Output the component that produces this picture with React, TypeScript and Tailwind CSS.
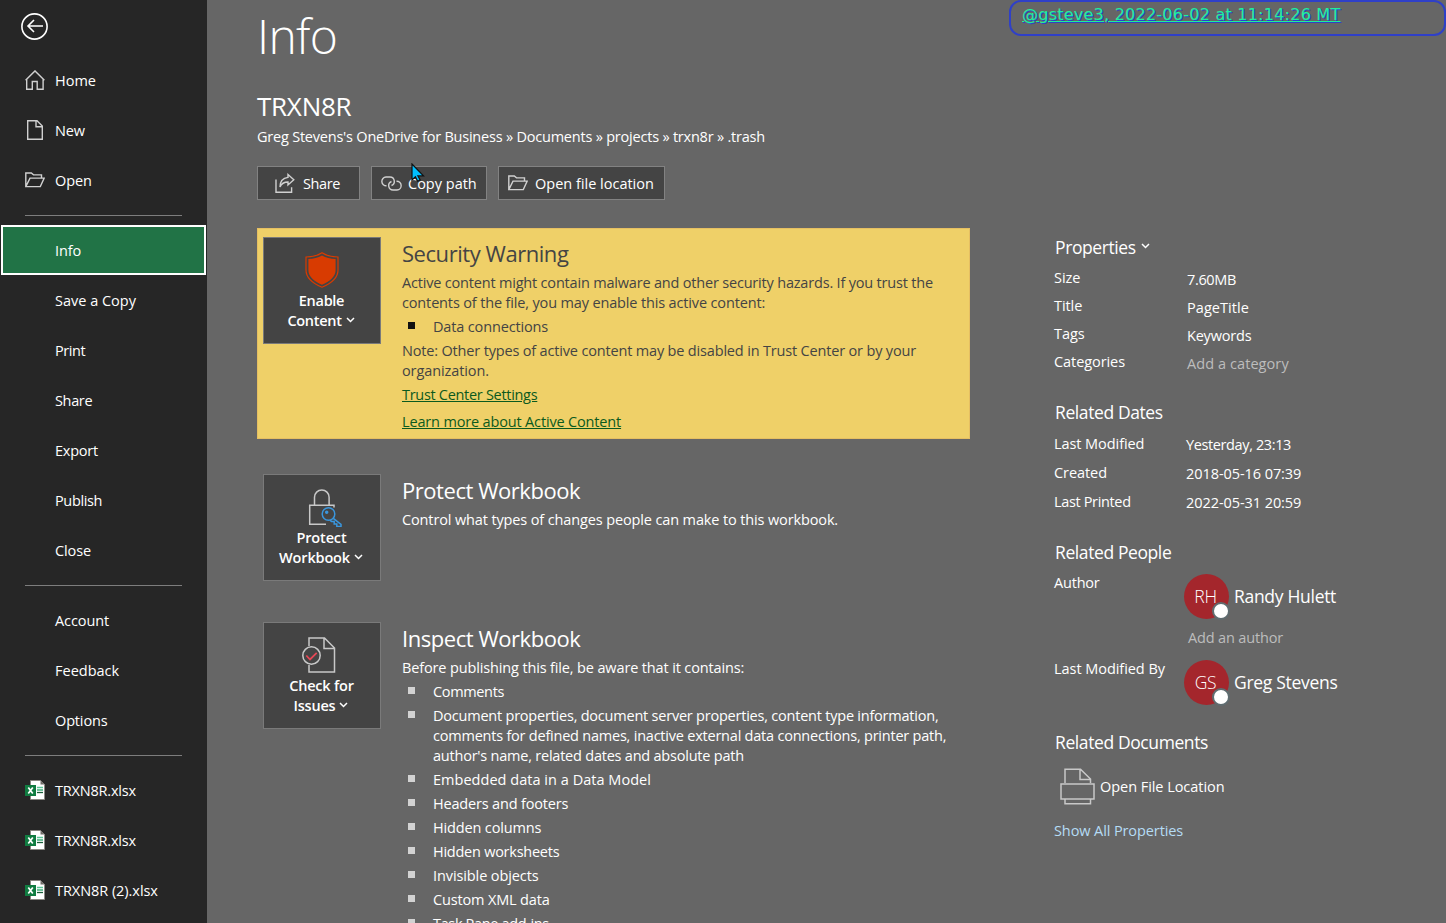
import React from "react";

const base = "block whitespace-nowrap text-[14.5px] leading-5";
const h2 = "h-9 text-[22px] leading-8 tracking-[-0.45px]";

function Home() {
  return (
    <svg width="20" height="20" viewBox="0 0 20 20" fill="none" stroke="#d0d0d0" strokeWidth="1.4">
      <path d="M.6 10.200 10 .9l9.400 9.300M1.700 9.200v10.100h5.600v-7.800h4.900v7.800h5.900V9.200" />
    </svg>
  );
}
function NewDoc() {
  return (
    <svg width="20" height="20" viewBox="0 0 20 20" fill="none" stroke="#d0d0d0" strokeWidth="1.4">
      <path d="M2.700.7h9.300l5.300 5.300v13.300H2.700zM11 .7v6h6.300" />
    </svg>
  );
}
function Folder() {
  return (
    <svg width="20" height="16" viewBox="0 0 20 16" fill="none" stroke="#d0d0d0" strokeWidth="1.4">
      <path d="M.8 14.600V1h5.500l2.200 1.900h8v3.200M.8 14.600 5 6.100h14.200l-3.900 8.500z" />
    </svg>
  );
}
function ShareIcon() {
  return (
    <svg width="20" height="20" viewBox="0 0 20 20" fill="none" stroke="#d0d0d0" strokeWidth="1.4">
      <path d="M1 6.500v12.700h15.600v-5M13 1.500l5.800 5.200-5.800 5.200V9C9 9 6.500 10.500 5 14c0-5.500 3-9 8-9.600z" />
    </svg>
  );
}
function LinkIcon() {
  return (
    <svg width="21" height="15" viewBox="0 0 21 15" fill="none" stroke="#d0d0d0" strokeWidth="1.4">
      <path d="M5.500 9.800A4.400 4.400 0 0 1 5 1h4a4.400 4.400 0 0 1 1.500 8.500 M15.500 5.200a4.400 4.400 0 0 1 .5 8.800h-4a4.400 4.400 0 0 1-1.500-8.500" />
    </svg>
  );
}
function Excel() {
  return (
    <svg width="20" height="20" viewBox="0 0 20 20">
      <path d="M5.500.5h10l4 4v15h-14z" fill="#fff" stroke="#8a8782" />
      <path d="M15.500.5v4h4z" fill="#6f6c68" />
      <path d="M12 7.500h6" stroke="#5cc99a" strokeWidth="1.500" />
      <path d="M12 10h6" stroke="#21a366" strokeWidth="1.300" />
      <path d="M12 12.500h6" stroke="#185c37" strokeWidth="1.300" />
      <path d="M0 5h11v11H0z" fill="#107c41" />
      <path d="m3.300 7.400 4.500 6.200M7.800 7.400l-4.500 6.200" stroke="#fff" strokeWidth="1.700" />
    </svg>
  );
}
function Chevron() {
  return (
    <svg className="mb-[3px] shrink-0" width="9" height="6" viewBox="0 0 9 6" fill="none" stroke="#fff" strokeWidth="1.500">
      <path d="m1 1 3.500 3.500L8 1" />
    </svg>
  );
}
function Shield() {
  return (
    <svg width="34" height="36" viewBox="0 0 34 36">
      <path d="M17 .8c4 2.700 9 4 16 4.200v13c0 8-7 13.500-16 17.200C8 31.500 1 26 1 18V5C8 4.800 13 3.500 17 .8z" fill="none" stroke="#d83b01" strokeWidth="1.200" />
      <path d="M17 3.400c4 2.300 8.500 3.400 13.600 3.700V18c0 7-6 11.400-13.600 14.800C9.400 29.400 3.400 25 3.400 18V7.100C8.500 6.800 13 5.700 17 3.400z" fill="#d83b01" />
    </svg>
  );
}
function Lock() {
  return (
    <svg className="ml-[6px]" width="34" height="38" viewBox="0 0 34 38" fill="none" stroke="#c8c8c8" strokeWidth="1.500">
      <path d="M6.500 16V8.300a7.300 7.300 0 0 1 14.600 0V16M26 18.500V16.200H1.700V35.300H18" />
      <g stroke="#3a96dd">
        <circle cx="20.500" cy="25" r="6.300" />
        <path d="m25.300 29.300 7.700 6v2.300h-4.200v-2.500h-2.600v-2.500h-2.700l-1.500-1.500" />
        <circle cx="18.700" cy="23.200" r="1" fill="#3a96dd" />
      </g>
    </svg>
  );
}
function Inspect() {
  return (
    <svg className="mr-[6px]" width="34" height="36" viewBox="0 0 34 36" fill="none" stroke="#c8c8c8" strokeWidth="1.500">
      <path d="M7 9V1h15.500l10 10v24H7v-7M22 1v10.500h10.500" />
      <circle cx="9.500" cy="18.500" r="8.700" />
      <path d="m4.300 18.500 3.700 4 6.700-6.700" stroke="#e74856" strokeWidth="1.800" />
    </svg>
  );
}
function FileLocation() {
  return (
    <svg width="35" height="37" viewBox="0 0 35 37" fill="none" stroke="#c8c8c8" strokeWidth="1.500">
      <path d="M5 15V1.200h15.500L30.500 11v4M20 1.200v10.300h10.500M1 16h33v15H1zM5 31.500v4.300h25.500v-4.300" />
    </svg>
  );
}

function NavItem({ label, icon, ls = "tracking-[-0.1px]" }: { label: string; icon?: React.ReactNode; ls?: string }) {
  return (
    <li className="flex h-[50px] items-center pl-[25px]">
      <span className="flex w-[30px]">{icon}</span>
      <span className={`${base} pt-0.5 ${ls}`}>{label}</span>
    </li>
  );
}
function Divider() {
  return (
    <li className="flex h-5 items-center pr-[25px] pl-[25px]">
      <span className="h-px w-full bg-[#7d7d7d]" />
    </li>
  );
}
function Tile({ icon, a, b, ls }: { icon: React.ReactNode; a: string; b: string; ls: string }) {
  return (
    <button className="flex h-[107px] w-[118px] shrink-0 flex-col items-center border border-[#7a7a7a] bg-[#444] pt-[14px]">
      <span className="flex h-[39px]">{icon}</span>
      <span className={`${base} pr-px font-semibold ${ls}`}>{a}</span>
      <span className="flex items-center gap-1 pr-0.5">
        <span className={`${base} font-semibold ${ls}`}>{b}</span>
        <Chevron />
      </span>
    </button>
  );
}
function Bullet({ lines, dark, ls }: { lines: string[]; dark?: boolean; ls?: string }) {
  return (
    <li className="mb-1 flex pl-1.5">
      <span className={`mt-[5px] mr-[18px] h-[7px] w-[7px] shrink-0 ${dark ? "bg-[#111]" : "bg-[#d2d2d2]"}`} />
      <span>
        {lines.map((l) => (
          <span key={l} className={`${base} ${ls ?? "tracking-[-0.15px]"}`}>{l}</span>
        ))}
      </span>
    </li>
  );
}
function Heading({ children }: { children: React.ReactNode }) {
  return <h3 className="flex h-6 items-center gap-[5px] pl-px text-[17.500px] tracking-[-0.4px] whitespace-nowrap">{children}</h3>;
}
function Person({ initials, name }: { initials: string; name: string }) {
  return (
    <span className="flex items-center">
      <span className="relative flex h-[45px] w-[45px] items-center justify-center rounded-full bg-[#a4262c] pr-0.5 text-[17.500px] font-light tracking-[-0.3px]">
        {initials}
        <span className="absolute right-[-1px] bottom-[-1px] h-[18px] w-[18px] rounded-full border-2 border-[#5f6c70] bg-white" />
      </span>
      <span className="ml-[5px] text-[17.500px] whitespace-nowrap tracking-[-0.3px]">{name}</span>
    </span>
  );
}
function Row({ k, v, h, off, ls = "tracking-[-0.2px]", muted }: { k: string; v: string; h: string; off: string; ls?: string; muted?: boolean }) {
  return (
    <div className={`flex ${h}`}>
      <span className={`${base} w-[132px] ${k === "Last Printed" ? "tracking-[-0.35px]" : "tracking-[-0.07px]"}`}>{k}</span>
      <span className={`${base} ${ls} ${off} ${muted ? "text-[#bdbdbd]" : ""}`}>{v}</span>
    </div>
  );
}

export default function App() {
  return (
    <div className="flex h-[923px] w-[1446px] overflow-hidden bg-[#666] font-['Open_Sans','Noto_Sans',sans-serif] text-white">
      <nav className="h-full w-[207px] shrink-0 bg-[#262626]">
        <div className="flex h-[55px] pt-[13px] pl-[21px]">
          <svg width="27" height="27" viewBox="0 0 27 27" fill="none" stroke="#fff" strokeWidth="1.600">
            <circle cx="13.500" cy="13.500" r="12.600" />
            <path d="M22 13H7M13 7l-6 6 6 6" />
          </svg>
        </div>
        <ul>
          <NavItem label="Home" icon={<Home />} ls="tracking-normal" />
          <NavItem label="New" icon={<NewDoc />} />
          <NavItem label="Open" icon={<Folder />} />
          <Divider />
          <li className="ml-px flex h-[50px] w-[205px] items-center border-2 border-white bg-[#217346] pl-[52px]">
            <span className={`${base} pt-0.5 tracking-[-0.1px]`}>Info</span>
          </li>
          <NavItem label="Save a Copy" ls="tracking-normal" />
          <NavItem label="Print" ls="tracking-[-0.45px]" />
          <NavItem label="Share" ls="tracking-[-0.35px]" />
          <NavItem label="Export" ls="tracking-[-0.25px]" />
          <NavItem label="Publish" ls="tracking-[-0.35px]" />
          <NavItem label="Close" />
          <Divider />
          <NavItem label="Account" />
          <NavItem label="Feedback" ls="tracking-normal" />
          <NavItem label="Options" ls="tracking-[-0.15px]" />
          <Divider />
          <NavItem label="TRXN8R.xlsx" icon={<Excel />} ls="tracking-[-0.2px]" />
          <NavItem label="TRXN8R.xlsx" icon={<Excel />} ls="tracking-[-0.2px]" />
          <NavItem label="TRXN8R (2).xlsx" icon={<Excel />} ls="tracking-[-0.05px]" />
        </ul>
      </nav>

      <main className="relative flex h-full w-[797px] shrink-0 flex-col pl-[50px]">
        <h1 className="h-[90px] shrink-0 pt-0.5 text-[48px] leading-[68px] font-light tracking-[-0.7px]">Info</h1>
        <h2 className="h-[37px] shrink-0 text-[26px] leading-8 tracking-[-0.25px]">TRXN8R</h2>
        <p className={`${base} shrink-0 tracking-[-0.215px]`}>
          Greg Stevens's OneDrive for Business » Documents » projects » trxn8r » .trash
        </p>
        <div className="mt-[19px] flex shrink-0 gap-[11px]">
          <button className="flex h-[34px] w-[103px] items-center border border-[#828282] bg-[#444] pl-[17px]">
            <ShareIcon />
            <span className={`${base} ml-2 pt-0.5 tracking-[-0.4px]`}>Share</span>
          </button>
          <button className="flex h-[34px] w-[116px] items-center border border-[#828282] bg-[#444] pl-[9px]">
            <LinkIcon />
            <span className={`${base} ml-[6px] pt-0.5 tracking-normal`}>Copy path</span>
          </button>
          <button className="flex h-[34px] w-[167px] items-center border border-[#828282] bg-[#444] pl-[9px]">
            <Folder />
            <span className={`${base} ml-[7px] pt-0.5 tracking-normal`}>Open file location</span>
          </button>
        </div>
        <svg className="absolute top-[163px] left-[204px]" width="14" height="20" viewBox="0 0 14 20">
          <path d="M1 1v16l3.400-3.200 2.300 4.400 2.500-1.300-2.300-4H12.500z" fill="#00bfff" stroke="#111" strokeWidth="1.200" />
        </svg>

        <section className="mt-7 flex h-[211px] w-[713px] shrink-0 border border-[#e6bf62] bg-[#efd068] pt-2 pl-[5px]">
          <Tile icon={<Shield />} a="Enable" b="Content" ls="tracking-[-0.3px]" />
          <div className="ml-[21px] text-[#444]">
            <h2 className={h2}>Security Warning</h2>
            <p className={`${base} tracking-[-0.19px]`}>Active content might contain malware and other security hazards. If you trust the</p>
            <p className={`${base} tracking-[-0.15px]`}>contents of the file, you may enable this active content:</p>
            <ul className="mt-1">
              <Bullet dark lines={["Data connections"]} />
            </ul>
            <p className={`${base} tracking-[-0.17px]`}>Note: Other types of active content may be disabled in Trust Center or by your</p>
            <p className={`${base} tracking-[-0.1px]`}>organization.</p>
            <a className={`${base} mt-1 tracking-[-0.3px] text-[#0b5a1e] underline underline-offset-1`}>Trust Center Settings</a>
            <a className={`${base} mt-[7px] tracking-[-0.16px] text-[#0b5a1e] underline underline-offset-1`}>Learn more about Active Content</a>
          </div>
        </section>

        <section className="mt-[35px] flex shrink-0 pl-1.5">
          <Tile icon={<Lock />} a="Protect" b="Workbook" ls="tracking-[-0.15px]" />
          <div className="ml-[21px]">
            <h2 className={h2}>Protect Workbook</h2>
            <p className={`${base} tracking-[-0.13px]`}>Control what types of changes people can make to this workbook.</p>
          </div>
        </section>

        <section className="mt-[41px] flex shrink-0 pl-1.5">
          <Tile icon={<Inspect />} a="Check for" b="Issues" ls="tracking-[-0.2px]" />
          <div className="ml-[21px]">
            <h2 className={h2}>Inspect Workbook</h2>
            <p className={`${base} tracking-[-0.14px]`}>Before publishing this file, be aware that it contains:</p>
            <ul className="mt-1">
              <Bullet lines={["Comments"]} ls="tracking-[-0.35px]" />
              <Bullet
                ls="tracking-[-0.22px]"
                lines={[
                  "Document properties, document server properties, content type information,",
                  "comments for defined names, inactive external data connections, printer path,",
                  "author's name, related dates and absolute path",
                ]}
              />
              <Bullet lines={["Embedded data in a Data Model"]} ls="tracking-[0.03px]" />
              <Bullet lines={["Headers and footers"]} ls="tracking-[-0.18px]" />
              <Bullet lines={["Hidden columns"]} />
              <Bullet lines={["Hidden worksheets"]} ls="tracking-[-0.25px]" />
              <Bullet lines={["Invisible objects"]} ls="tracking-[-0.1px]" />
              <Bullet lines={["Custom XML data"]} />
              <Bullet lines={["Task Pane add-ins"]} ls="tracking-[-0.35px]" />
            </ul>
          </div>
        </section>
      </main>

      <aside className="flex w-[442px] flex-col">
        <div className="ml-[5px] h-9 w-[437px] shrink-0 rounded-[12px] border-2 border-[#2f40c8] pl-[11px]">
          <a className="block font-['DejaVu_Sans',sans-serif] text-[16px] leading-[26px] tracking-[0.24px] whitespace-nowrap text-[#1ff09a] underline [text-shadow:1px_1px_0_#2f40c8]">
            @gsteve3, 2022-06-02 at 11:14:26 MT
          </a>
        </div>
        <div className="flex flex-col pt-[199px] pl-[50px]">
          <Heading>
            Properties <Chevron />
          </Heading>
          <div className="mt-[9px]">
            <Row k="Size" v="7.60MB" h="h-7" off="mt-0.5 ml-px" ls="tracking-[-0.35px]" />
            <Row k="Title" v="PageTitle" h="h-7" off="mt-0.5 ml-px" ls="tracking-[0.05px]" />
            <Row k="Tags" v="Keywords" h="h-7" off="mt-0.5 ml-px" />
            <Row k="Categories" v="Add a category" h="h-7" off="mt-0.5 ml-px" ls="tracking-[0.08px]" muted />
          </div>
          <div className="mt-5">
            <Heading>Related Dates</Heading>
            <div className="mt-[10px]">
              <Row k="Last Modified" v="Yesterday, 23:13" h="h-[29px]" off="mt-px" ls="tracking-[-0.38px]" />
              <Row k="Created" v="2018-05-16 07:39" h="h-[29px]" off="mt-px" ls="tracking-[-0.07px]" />
              <Row k="Last Printed" v="2022-05-31 20:59" h="h-[29px]" off="mt-px" ls="tracking-[-0.07px]" />
            </div>
          </div>
          <div className="mt-[19px]">
            <Heading>Related People</Heading>
            <div className="mt-[9px] flex">
              <span className={`${base} w-[130px] tracking-[-0.2px]`}>Author</span>
              <div className="pt-px">
                <Person initials="RH" name="Randy Hulett" />
                <span className={`${base} mt-[9px] ml-1 tracking-[-0.15px] text-[#bdbdbd]`}>Add an author</span>
              </div>
            </div>
            <div className="mt-[11px] flex">
              <span className={`${base} w-[130px] tracking-[-0.05px]`}>Last Modified By</span>
              <div className="pt-px">
                <Person initials="GS" name="Greg Stevens" />
              </div>
            </div>
          </div>
          <div className="mt-[25px]">
            <Heading>Related Documents</Heading>
            <div className="mt-[14px] flex items-center pl-1.5">
              <FileLocation />
              <span className={`${base} ml-[5px] tracking-[-0.05px]`}>Open File Location</span>
            </div>
            <a className={`${base} mt-4 tracking-[-0.1px] text-[#b5dcf5]`}>Show All Properties</a>
          </div>
        </div>
      </aside>
    </div>
  );
}
